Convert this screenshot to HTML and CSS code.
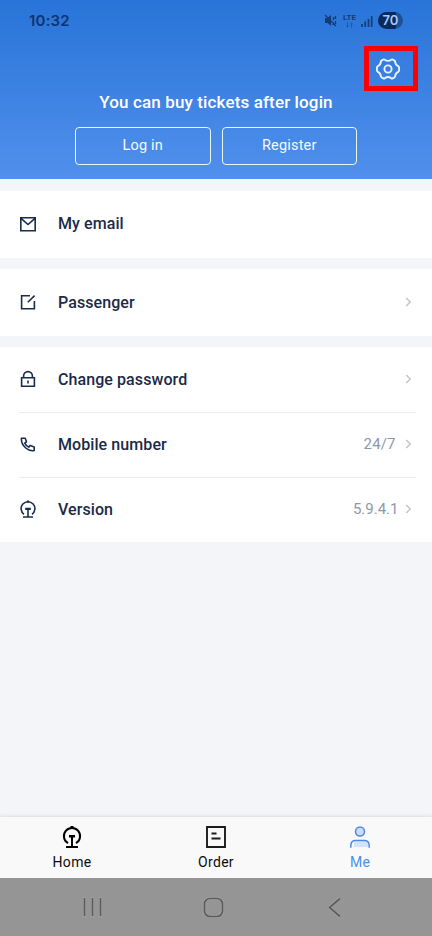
FILE: index.html
```html
<!DOCTYPE html>
<html lang="en">
<head>
<meta charset="utf-8">
<meta name="viewport" content="width=device-width, initial-scale=1">
<title>Me</title>
<link rel="stylesheet" href="styles.css">
</head>
<body>
<div class="screen">
  <header class="hero">
    <div class="status">
      <span class="clock">10:32</span>
      <div class="status-icons">
        <svg class="mute" width="13" height="13" viewBox="0 0 13 13"><path d="M1 4h2.500L7 1v11L3.500 9H1z" fill="currentColor"/><path d="M1 1l11 11M9 3l1 1.500L9 6M11.500 2v3M9 8v3M11.500 7v3" fill="none" stroke="currentColor" stroke-width="1.300"/></svg>
        <span class="lte"><b>LTE</b><svg width="9" height="6" viewBox="0 0 9 6"><path d="M2.500 0v5M.8 3.500l1.700 1.700 1.700-1.700M6.500 6V1M4.800 2.500L6.500.8l1.700 1.700" fill="none" stroke="currentColor" stroke-width=".8"/></svg></span>
        <svg class="signal" width="12" height="12" viewBox="0 0 12 12"><path d="M1 9v3M4.200 6.500V12M7.500 4v8M10.700 1v11" stroke="currentColor" stroke-width="1.700"/></svg>
        <span class="battery">70</span>
      </div>
    </div>
    <div class="settings">
      <svg width="26" height="26" viewBox="0 0 26 26" fill="none" stroke="#e9f3ff" stroke-width="1.900" stroke-linejoin="round"><path transform="translate(.2 .5) scale(.985 .96)" d="M8.200 3.200Q9 2.800 9.700 3.400 13 5.800 16.300 3.400 17 2.800 17.800 3.200L19.600 4.300Q20.200 4.700 20.300 5.600 20.500 8.600 23.200 10 24.200 10.600 24.200 11.500V14.500Q24.200 15.400 23.200 16 20.500 17.400 20.300 20.400 20.200 21.300 19.600 21.700L17.800 22.800Q17 23.200 16.300 22.600 13 20.200 9.700 22.600 9 23.200 8.200 22.800L6.400 21.700Q5.800 21.300 5.700 20.400 5.500 17.400 2.800 16 1.800 15.400 1.800 14.500V11.500Q1.800 10.600 2.800 10 5.500 8.600 5.700 5.600 5.800 4.700 6.400 4.300Z"/><circle cx="13" cy="13" r="3.600"/></svg>
    </div>
    <h1>You can buy tickets after login</h1>
    <div class="actions">
      <button>Log in</button>
      <button>Register</button>
    </div>
  </header>

  <main>
    <section class="group">
      <div class="row">
        <svg class="icon" viewBox="0 0 18 18"><path d="M1.800 2.800h14.400v13H1.800zM2 3.300l7 6.200 7-6.200"/></svg>
        <span class="label">My email</span>
      </div>
    </section>
    <section class="group passenger">
      <div class="row">
        <svg class="icon" viewBox="0 0 18 18"><path d="M11 2.800H2.600v13h12.800V8M8.800 9.200l6.800-6.600"/></svg>
        <span class="label">Passenger</span>
        <svg class="chevron" viewBox="0 0 7 10"><path d="M1.200 1l4 4-4 4"/></svg>
      </div>
    </section>
    <section class="group stacked">
      <div class="row">
        <svg class="icon" viewBox="0 0 18 18"><path d="M2.600 7.800h12.800v8.500H2.600zM4.600 7.800V6a4.400 4.400 0 0 1 8.800 0v1.800M9 10.500v3"/></svg>
        <span class="label">Change password</span>
        <svg class="chevron" viewBox="0 0 7 10"><path d="M1.200 1l4 4-4 4"/></svg>
      </div>
      <div class="row">
        <svg class="icon" viewBox="0 0 18 18"><path d="M2.400 3.200h3.800l1.300 3.600-1.800 1.400q1.300 2.500 4 3.900l1.600-1.700 3.900 1.500v3.600q-4.500.9-8.500-2.500-4.600-4-4.300-9.800z" stroke-linejoin="round"/></svg>
        <span class="label">Mobile number</span>
        <span class="value hours">24/7</span>
        <svg class="chevron" viewBox="0 0 7 10"><path d="M1.200 1l4 4-4 4"/></svg>
      </div>
      <div class="row">
        <svg class="icon" viewBox="0 0 18 18"><path d="M5 14.300A6.900 6.900 0 1 1 13 14.300M9 8.500V17M4 17h10"/><path d="M6.200 8.800h5.600M8 1.700h2" stroke-width="2.200"/></svg>
        <span class="label">Version</span>
        <span class="value">5.9.4.1</span>
        <svg class="chevron" viewBox="0 0 7 10"><path d="M1.200 1l4 4-4 4"/></svg>
      </div>
    </section>
  </main>

  <nav class="tabs">
    <a class="tab">
      <svg width="24" height="24" viewBox="0 0 24 24" fill="none" stroke="#000" stroke-width="2"><path d="M8 18.200A8.100 8.100 0 1 1 16 18.200M12 11v11M6 22h12"/><path d="M9 11.200h6M10.500 2.200h3" stroke-width="2.600"/></svg>
      <span>Home</span>
    </a>
    <a class="tab">
      <svg width="24" height="24" viewBox="0 0 24 24" fill="none" stroke="#1c1c1c" stroke-width="1.900"><path d="M3 2h18v20H3zM7.500 8.500h5M7.500 13.500h9"/></svg>
      <span>Order</span>
    </a>
    <a class="tab active">
      <svg width="24" height="24" viewBox="0 0 24 24" fill="none" stroke="#4a8be0" stroke-width="1.500"><circle cx="12" cy="6.500" r="4.500" fill="#c9dcfb"/><path d="M6 22v-4q0-1.500 1.500-1.500H20V22z" fill="#d2e1fc" stroke="none"/><path d="M2.800 22.700v-2.200q0-5 5-5h8.400q5 0 5 5v2.200"/></svg>
      <span>Me</span>
    </a>
  </nav>
  <div class="system-nav">
    <svg viewBox="0 0 24 24"><path class="edge" d="M4.500 2.500v19M12.500 2.500v19M20.500 2.500v19"/><path d="M4.500 3v18M12.500 3v18M20.500 3v18"/></svg>
    <svg viewBox="0 0 24 24"><rect class="edge" x="3.500" y="3.500" width="18" height="18" rx="5.500"/><rect x="3.500" y="3.500" width="18" height="18" rx="5.500"/></svg>
    <svg viewBox="0 0 24 24"><path class="edge" d="M18 3.200L7.500 12.500 18 21.800"/><path d="M18 3.500L7.500 12.500 18 21.500"/></svg>
  </div>
</div>
</body>
</html>
```
FILE: styles.css
```css
* { box-sizing: border-box; }

body {
  margin: 0;
  font-family: Roboto, "Liberation Sans", sans-serif;
}

.screen {
  display: flex;
  flex-direction: column;
  width: 432px;
  height: 936px;
  background: #f4f5f9;
  overflow: hidden;
}

.hero {
  display: flex;
  flex-direction: column;
  align-items: center;
  height: 179px;
  background: linear-gradient(#2874d8, #5190ec);
  color: #fff;
}

.status {
  display: flex;
  justify-content: space-between;
  align-items: center;
  width: 100%;
  height: 41px;
  padding: 0 29px;
  color: #153c78;
}

.clock {
  font-family: Inter, sans-serif;
  font-size: 15px;
  font-weight: 600;
  letter-spacing: .2px;
  color: #0e3470;
}

.status-icons {
  display: flex;
  align-items: center;
}

.mute { margin-right: 6px; }

.lte {
  display: flex;
  flex-direction: column;
  align-items: center;
  gap: 1px;
  width: 13px;
  margin-right: 5px;
  font-size: 8px;
  line-height: 7px;
}

.lte svg { opacity: .6; }
.signal { margin-right: 5px; }

.battery {
  width: 25px;
  height: 17px;
  border-radius: 9px;
  background: linear-gradient(90deg, #0a2a5c 70%, #1d509b 70%);
  color: #a9c8f5;
  font-family: Inter, sans-serif;
  font-size: 13px;
  font-weight: 600;
  line-height: 17px;
  text-align: center;
}

.settings {
  display: flex;
  align-self: flex-end;
  align-items: center;
  width: 54px;
  height: 45px;
  margin: 5px 14px 0 0;
  padding-left: 5.5px;
  border: 5px solid #fe0000;
}

.hero h1 {
  margin: 0;
  font-size: 17px;
  font-weight: 500;
  line-height: 22px;
  letter-spacing: .13px;
}

.actions {
  display: flex;
  gap: 11px;
  margin-top: 14px;
}

.actions button {
  width: 135.5px;
  height: 37.5px;
  padding: 0 0 1px;
  border: 1.5px solid #e9f5ff;
  border-radius: 4px;
  background: transparent;
  color: #f4faff;
  font: 400 14.5px Roboto, sans-serif;
  letter-spacing: .2px;
}

main {
  display: flex;
  flex: 1;
  flex-direction: column;
  gap: 11px;
  padding-top: 12px;
}

.group {
  background: #fff;
  padding: 0 16px 0 19px;
}

.row {
  display: flex;
  align-items: center;
  height: 67px;
  padding-bottom: 2px;
}

.passenger .row { padding-bottom: 1px; }
.stacked .row { height: 65px; }
.stacked .row:first-child { padding-bottom: 1px; }
.stacked .row + .row { border-top: 1px solid #ebecee; }

.icon {
  width: 18px;
  height: 18px;
  margin-right: 21px;
  fill: none;
  stroke: #1b2d4e;
  stroke-width: 1.6;
}

.label {
  color: #1b2a47;
  font-size: 16px;
  font-weight: 500;
  letter-spacing: .08px;
}

.value {
  margin-left: auto;
  color: #8e98a8;
  font-size: 15px;
}

.hours { letter-spacing: .1px; }

.chevron {
  width: 7px;
  height: 10px;
  margin: 0 4.500px 0 auto;
  fill: none;
  stroke: #c3c5ca;
  stroke-width: 1.5;
}

.value + .chevron { margin-left: 6px; }
.hours + .chevron { margin-left: 9px; }

.tabs {
  display: grid;
  grid-template-columns: repeat(3, 1fr);
  height: 61px;
  background: #f9f9f9;
  box-shadow: 0 -1px 3px #d9dbe0;
}

.tab {
  display: flex;
  flex-direction: column;
  align-items: center;
  gap: 4px;
  padding-top: 8px;
  color: #0c0c0c;
  font-size: 14px;
  line-height: 18px;
  letter-spacing: .3px;
}

.active { color: #4a90e8; }

.system-nav {
  display: flex;
  justify-content: space-between;
  align-items: center;
  height: 58px;
  padding: 0 86px 0 80px;
  background: #959595;
}

.system-nav svg {
  width: 24px;
  height: 24px;
  fill: none;
  stroke: #5b5b5b;
  stroke-width: 1.7;
}

.system-nav .edge {
  stroke: #a5a5a5;
  stroke-width: 3;
}
```
